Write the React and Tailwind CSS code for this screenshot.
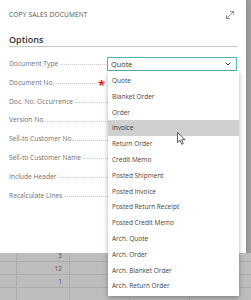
import { ChevronDown, MoveDiagonal } from "lucide-react";

const fields = [
  "Document Type",
  "Document No.",
  "Doc. No. Occurrence",
  "Version No.",
  "Sell-to Customer No.",
  "Sell-to Customer Name",
  "Include Header",
  "Recalculate Lines",
];

const options = [
  "Quote",
  "Blanket Order",
  "Order",
  "Invoice",
  "Return Order",
  "Credit Memo",
  "Posted Shipment",
  "Posted Invoice",
  "Posted Return Receipt",
  "Posted Credit Memo",
  "Arch. Quote",
  "Arch. Order",
  "Arch. Blanket Order",
  "Arch. Return Order",
];

const rows = ["5", "12", "1", ""];

export default function App() {
  return (
    <div
      className="relative w-[251px] h-[300px] overflow-hidden bg-[#a3a3a3]"
      style={{ fontFamily: '"Open Sans", "Noto Sans", sans-serif' }}
    >
      {/* dialog */}
      <div className="w-[246px] h-[253px] bg-white shadow-[0_2px_6px_rgba(0,0,0,0.25)] px-[9px] pt-[10px]">
        <div className="flex items-center justify-between h-[10px]">
          <span className="text-[6.5px] tracking-[0.2px] text-[#505050] leading-[10px]">COPY SALES DOCUMENT</span>
          <MoveDiagonal className="w-[12px] h-[12px] text-[#666] mr-[1px]" strokeWidth={1.4} />
        </div>
        <div className="mt-[14px] h-[13px] border-b border-[#c6c6c6]">
          <span className="text-[9px] font-semibold text-[#333] leading-[11px] block">Options</span>
        </div>
        <div className="mt-[10px] flex flex-col gap-[4.8px]">
          {fields.map((f, i) => (
            <div key={f} className="flex items-center h-[14px]">
              <div className={i === 1 ? "w-[88px] flex items-center overflow-hidden" : "w-[99px] flex items-center overflow-hidden"}>
                <span className="text-[6.7px] text-[#707070] whitespace-nowrap pr-[2px]">{f}</span>
                <span className="flex-1 border-b border-dotted border-[#c8c8c8] translate-y-[1px]" />
              </div>
              {i === 1 && (
                <span className="w-[11px] text-[13px] font-bold leading-none text-[#e02020] translate-y-[3px] pl-[1px]">*</span>
              )}
              {i === 0 && (
                <div className="w-[131px] h-[14px] border border-[#52b4b4] flex items-center justify-between pl-[3px] pr-[4px]">
                  <span className="text-[7.3px] text-[#333]">Quote</span>
                  <ChevronDown className="w-[8px] h-[8px] text-[#333]" strokeWidth={3} />
                </div>
              )}
            </div>
          ))}
        </div>
      </div>

      {/* page behind */}
      <div className="bg-[#bdbdbd] h-[47px]">
        {rows.map((r, i) => (
          <div key={i} className={i === 0 ? "flex h-[9px] border-b border-[#acacac]" : "flex h-[13px] border-b border-[#acacac]"}>
            <div className="w-[17px] border-r border-[#acacac]" />
            <div
              className={
                i === 0
                  ? "w-[53px] border-r border-[#acacac] text-right pr-[7px] text-[6.5px] leading-[5px] text-[#555]"
                  : "w-[53px] border-r border-[#acacac] text-right pr-[7px] text-[6.5px] leading-[13px] text-[#555]"
              }
            >
              {r}
            </div>
            <div className="w-[60px] border-r border-[#acacac]" />
            <div className="w-[60px] border-r border-[#acacac]" />
            <div className="flex-1" />
          </div>
        ))}
      </div>

      {/* dropdown list */}
      <div className="absolute top-[71px] left-[108px] w-[131px] bg-white shadow-[0_2px_5px_rgba(0,0,0,0.3)] py-[2px]">
        {options.map((o) => (
          <div
            key={o}
            className={
              o === "Invoice"
                ? "h-[15.8px] flex items-center pl-[4px] text-[6.5px] text-[#333] bg-[#d0d0d0]"
                : "h-[15.8px] flex items-center pl-[4px] text-[6.5px] text-[#444]"
            }
          >
            {o}
          </div>
        ))}
      </div>

      {/* cursor */}
      <svg className="absolute left-[177px] top-[132px]" width="9" height="13" viewBox="0 0 9 13">
        <path d="M0.5 0.5 L0.5 10.5 L3 8.3 L4.8 12.3 L6.3 11.6 L4.6 7.7 L8 7.7 Z" fill="white" stroke="#333" strokeWidth="0.8" strokeLinejoin="round" />
      </svg>
    </div>
  );
}
